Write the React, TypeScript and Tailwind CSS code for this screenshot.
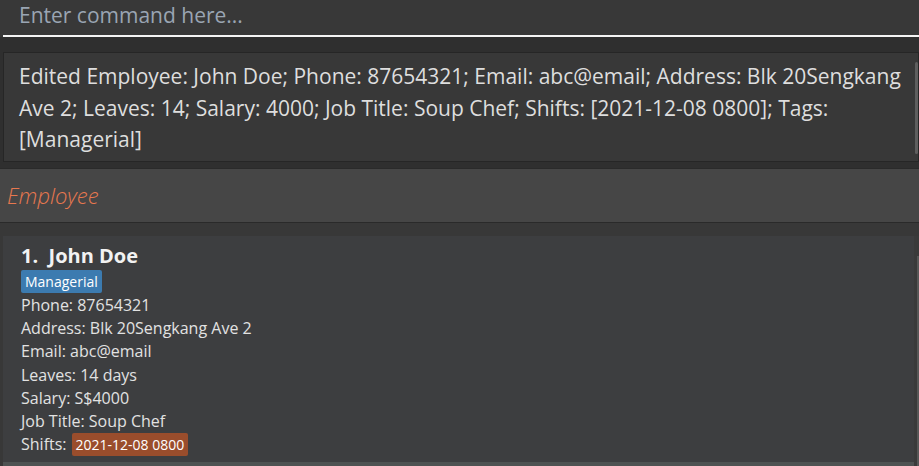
import React from "react";

const details = [
  "Phone: 87654321",
  "Address: Blk 20Sengkang Ave 2",
  "Email: abc@email",
  "Leaves: 14 days",
  "Salary: S$4000",
  "Job Title: Soup Chef",
];

export default function App() {
  return (
    <div
      className="w-[919px] h-[466px] overflow-hidden bg-[#333333] flex flex-col"
      style={{ fontFamily: '"Open Sans", "Noto Sans", sans-serif' }}
    >
      {/* command box */}
      <div className="h-[37px] bg-[#383838] pl-[3px]">
        <div className="h-[37px] border-b-2 border-[#f4f4f4] pl-[16px] text-[21px] leading-[30px] text-[#9aa5b3]">
          Enter command here...
        </div>
      </div>

      {/* result display */}
      <div className="bg-[#2f2f2f] pt-[15px] pb-[6px] pl-[3px]">
        <div className="relative h-[110px] border border-[#262626] bg-[#383838] pl-[15px] pr-[6px] pt-[8px] text-[21px] leading-[31.5px] text-[#dedede]">
          Edited Employee: John Doe; Phone: 87654321; Email: abc@email; Address: Blk 20Sengkang Ave 2; Leaves: 14; Salary: 4000; Job Title: Soup Chef; Shifts: [2021-12-08 0800]; Tags: [Managerial]
          <div className="absolute right-0 top-[9px] w-[3px] h-[92px] rounded-sm bg-[#5e5e5e]" />
        </div>
      </div>

      {/* list header */}
      <div className="h-[55px] bg-[#464646] border-t border-b border-[#2a2a2a] pl-[7px] flex items-center">
        <span className="italic font-light text-[22px] text-[#e8784f]">Employee</span>
      </div>

      {/* list */}
      <div className="flex-1 bg-[#383838] pt-[13px] pl-[3px] flex">
        <div className="flex-1 flex flex-col">
          <div className="flex-1 bg-[#3d3e40] pl-[18px] pt-[7px] text-[#e2e2e2]">
            <div className="text-[20px] font-bold leading-[26px] text-[#f2f2f2]">
              1.&nbsp;&nbsp;John Doe
            </div>
            <div className="mb-[1px]">
              <span className="inline-block bg-[#3c7bb0] text-white text-[14px] leading-[23px] px-[4px] rounded-[2px]">
                Managerial
              </span>
            </div>
            {details.map((d) => (
              <div key={d} className="text-[16px] leading-[23.2px]">
                {d}
              </div>
            ))}
            <div className="text-[16px] leading-[23px] flex items-center gap-[5px]">
              <span>Shifts:</span>
              <span className="inline-block bg-[#9a4d2c] text-white text-[14px] leading-[23px] px-[4px] rounded-[2px]">
                2021-12-08 0800
              </span>
            </div>
          </div>
          <div className="h-[4px] bg-[#4e5252]" />
        </div>
        <div className="w-[5px] bg-[#3a3a3a] pt-[20px] flex justify-end">
          <div className="w-[2px] h-full bg-[#575757]" />
        </div>
      </div>
    </div>
  );
}
